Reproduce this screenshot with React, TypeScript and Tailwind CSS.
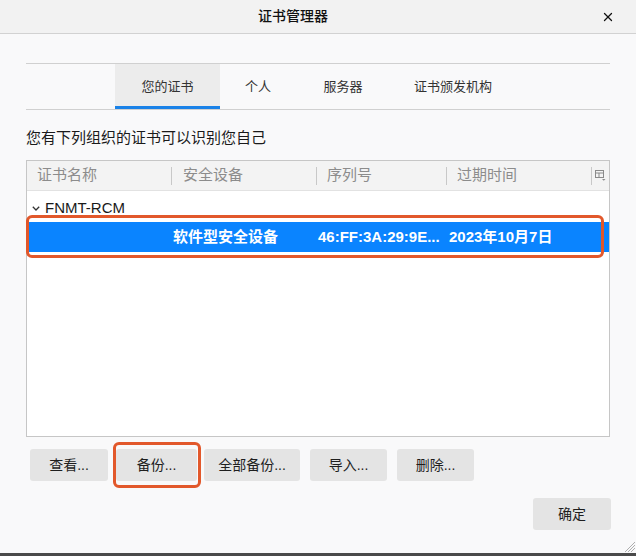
import { X } from 'lucide-react';

const font = { fontFamily: '"Liberation Sans", "Noto Sans CJK SC", sans-serif' };

function Btn({ label, w }: { label: string; w: string }) {
  return (
    <div
      className={`${w} h-[32px] bg-[#e4e4e4] rounded-[3px] flex items-center justify-center text-[14px] text-[#1e1e1e]`}
    >
      {label}
    </div>
  );
}

export default function App() {
  return (
    <div
      className="w-[636px] h-[556px] bg-[#f9f9fa] flex flex-col relative overflow-hidden text-[#222]"
      style={font}
    >
      {/* title bar */}
      <div className="h-[34px] shrink-0 bg-[#f2f2f2] border-b border-[#d2d2d2] flex items-center">
        <span className="ml-[258px] text-[14px] font-medium text-[#111]">证书管理器</span>
        <X className="ml-auto mr-[21px] w-[14px] h-[14px] text-[#111]" strokeWidth={2.2} />
      </div>

      {/* tabs */}
      <div className="mt-[29px] mx-[26px] h-[47px] border-y border-[#d0d0d0] flex text-[13px] text-[#333]">
        <div className="ml-[89px] w-[105px] bg-[#ececec] border-b-[3px] border-[#1a82e8] flex items-center justify-center pt-[3px]">
          您的证书
        </div>
        <div className="w-[76px] flex items-center justify-center">个人</div>
        <div className="w-[94px] flex items-center justify-center">服务器</div>
        <div className="w-[126px] flex items-center justify-center">证书颁发机构</div>
      </div>

      <div className="mt-[18px] px-[26px] text-[15px] leading-[20px] text-[#1a1a1a]">
        您有下列组织的证书可以识别您自己
      </div>

      {/* table */}
      <div className="mt-[12px] mx-[26px] h-[277px] shrink-0 border border-[#c6c6c6] bg-white flex flex-col relative">
        <div className="h-[30px] bg-[#f3f3f3] border-b border-[#e2e2e2] flex items-center text-[15px] text-[#8c8c8c]">
          <div className="w-[144px] pl-[10px]">证书名称</div>
          <div className="w-[145px] flex items-center">
            <span className="h-[18px] border-l border-[#c8c8c8]" />
            <span className="pl-[11px]">安全设备</span>
          </div>
          <div className="w-[130px] flex items-center">
            <span className="h-[18px] border-l border-[#c8c8c8]" />
            <span className="pl-[10px]">序列号</span>
          </div>
          <div className="w-[145px] flex items-center">
            <span className="h-[18px] border-l border-[#c8c8c8]" />
            <span className="pl-[10px]">过期时间</span>
          </div>
          <div className="flex items-center">
            <span className="h-[18px] border-l border-[#c8c8c8]" />
            <svg width="11" height="11" viewBox="0 0 11 11" className="ml-[3px]" fill="none" stroke="#8a8a8a" strokeWidth="1">
              <rect x="0.5" y="0.5" width="8" height="7" />
              <line x1="0.5" y1="3" x2="8.5" y2="3" />
              <line x1="4" y1="3" x2="4" y2="7.5" />
              <path d="M7 9 L10.5 9 L8.75 10.8 Z" fill="#8a8a8a" stroke="none" />
            </svg>
          </div>
        </div>

        <div className="h-[31px] flex items-start pl-[5px] text-[15px] text-[#1a1a1a] pt-[8px]">
          <svg width="8" height="5" viewBox="0 0 8 5" fill="none" stroke="#333" strokeWidth="1.3" className="mt-[7px]">
            <path d="M0.8 0.8 L4 4 L7.2 0.8" />
          </svg>
          <span className="ml-[5px] leading-[18px]">FNMT-RCM</span>
        </div>

        <div className="h-[30px] bg-[#0a84ff] flex items-center text-[15px] font-bold text-white">
          <div className="w-[144px]" />
          <div className="w-[145px] pl-[2px]">软件型安全设备</div>
          <div className="w-[130px] pl-[2px]">46:FF:3A:29:9E...</div>
          <div className="w-[145px] pl-[3px]">2023年10月7日</div>
        </div>

        <div className="absolute left-[-1px] top-[54px] w-[578px] h-[43px] border-[3px] border-[#e2582b] rounded-[6px]" />
      </div>

      {/* buttons */}
      <div className="mt-[12px] pl-[30px] flex">
        <Btn label="查看..." w="w-[78px]" />
        <div className="ml-[8px] relative">
          <Btn label="备份..." w="w-[81px]" />
          <div className="absolute left-[-3px] right-[-4px] top-[-7px] bottom-[-7px] border-[3px] border-[#e2582b] rounded-[6px]" />
        </div>
        <div className="ml-[7px]">
          <Btn label="全部备份..." w="w-[96px]" />
        </div>
        <div className="ml-[10px]">
          <Btn label="导入..." w="w-[77px]" />
        </div>
        <div className="ml-[10px]">
          <Btn label="删除..." w="w-[77px]" />
        </div>
      </div>

      <div className="mt-[17px] self-end mr-[25px]">
        <Btn label="确定" w="w-[78px]" />
      </div>

      <div className="mt-auto h-[3px] bg-[#4a4a4a]" />
      <svg width="12" height="12" viewBox="0 0 12 12" className="absolute right-[1px] bottom-[4px]" stroke="#9a9a9a" strokeWidth="0.8">
        <line x1="2" y1="12" x2="12" y2="2" />
        <line x1="5" y1="12" x2="12" y2="5" />
        <line x1="8" y1="12" x2="12" y2="8" />
      </svg>
    </div>
  );
}
